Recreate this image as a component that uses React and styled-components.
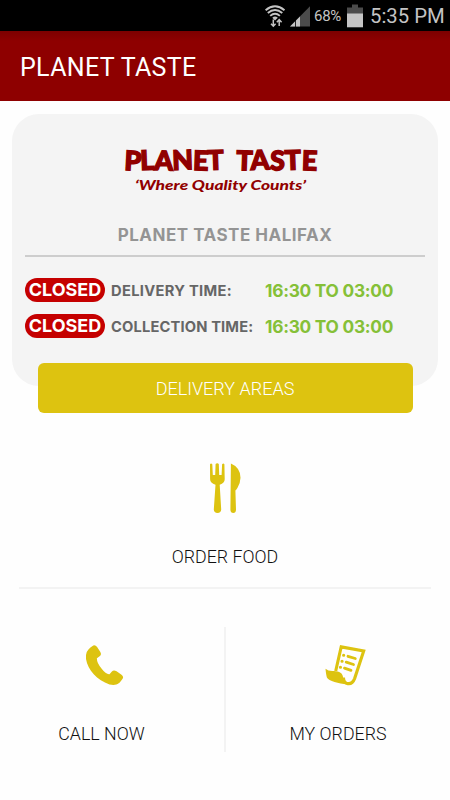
import React from "react";
import styled, { createGlobalStyle } from "styled-components";

export default function App() {
  return (
    <>
      <GlobalStyle />
      <Screen>
        <StatusBar>
          <StatusIcons />
          <Percent>68%</Percent>
          <BatteryIcon />
          <Clock>5:35 PM</Clock>
        </StatusBar>
        <Header>
          <Title>PLANET TASTE</Title>
        </Header>
        <Card>
          <Logo />
          <ShopName>PLANET TASTE HALIFAX</ShopName>
          <Times>
            <TimeRow>
              <Badge>CLOSED</Badge>
              <TimeLabel $spacing={0.3}>DELIVERY TIME:</TimeLabel>
              <Hours>16:30 TO 03:00</Hours>
            </TimeRow>
            <TimeRow>
              <Badge>CLOSED</Badge>
              <TimeLabel $spacing={0.15}>COLLECTION TIME:</TimeLabel>
              <Hours>16:30 TO 03:00</Hours>
            </TimeRow>
          </Times>
        </Card>
        <AreasButton>DELIVERY AREAS</AreasButton>
        <OrderFood>
          <CutleryIcon />
          <ActionLabel $top={33}>ORDER FOOD</ActionLabel>
        </OrderFood>
        <BottomActions>
          <CallNow>
            <PhoneIcon />
            <ActionLabel $top={37}>CALL NOW</ActionLabel>
          </CallNow>
          <Separator />
          <MyOrders>
            <ReceiptIcon />
            <ActionLabel $top={37}>MY ORDERS</ActionLabel>
          </MyOrders>
        </BottomActions>
      </Screen>
    </>
  );
}

function StatusIcons() {
  return (
    <svg width="46" height="30" viewBox="265 0 46 30">
      <g fill="none" stroke="#c4c4c4" strokeWidth="1.9">
        <path d="M265.6 9.2Q275 1.3 284.5 9.2" />
        <path d="M267.8 12.1Q275 6.1 282.3 12.1" />
        <path d="M270.2 14.9Q275 10.6 279.9 14.9" />
      </g>
      <path d="M272.3 16.8Q275 14.2 277.8 16.8L275 19.4Z" fill="#c4c4c4" />
      <path d="M273.3 18.5V25M271 22.8L273.3 25.2L275.6 22.8M279.2 25V18.8M276.8 21.2L279.2 18.7L281.6 21.2" fill="none" stroke="#c4c4c4" strokeWidth="1.5" />
      <path d="M290 25.5L310 5.3V25.5Z" fill="#4b4b4b" />
      <path d="M290 25.5L300 15.4V25.5Z" fill="#c4c4c4" />
      <path d="M295.5 18V26" stroke="#000" strokeWidth="0.8" />
    </svg>
  );
}

function BatteryIcon() {
  return (
    <svg width="16" height="30" viewBox="0 0 16 30">
      <path d="M5 3.5H11V6.5H16V26H0V6.5H5Z" fill="#4b4b4b" />
      <path d="M0 12.5H16V26.3H0Z" fill="#c4c4c4" />
    </svg>
  );
}

function Logo() {
  return (
    <LogoSvg viewBox="120 140 202 60">
      <LogoName x="124" y="170" textLength="100" rotate="3 -2 2 -2 2 -2">
        PLANET
      </LogoName>
      <LogoName x="236" y="170" textLength="81" rotate="2 -2 2 -2 2">
        TASTE
      </LogoName>
      <LogoSlogan x="135" y="190" textLength="171" lengthAdjust="spacingAndGlyphs">
        ‘Where Quality Counts’
      </LogoSlogan>
    </LogoSvg>
  );
}

function CutleryIcon() {
  return (
    <svg width="32" height="50" viewBox="209 463.5 32 50" fill="#ddc310">
      <path d="M210 464.8Q211 463 212.3 464.8L212.8 475.5H215.2L215.6 464.6Q217.3 463 218.8 464.6L219.2 475.5H221.6L222.1 464.8Q223.4 463 224.4 464.8L224.7 479.5Q224.8 483.3 219.7 485.3L221.2 510Q221 513.4 217.5 513.4Q214 513.4 213.8 510L215.5 485.3Q210 483.3 210.1 479.5Z" />
      <path d="M230.9 464Q240.4 468 240.5 478.2Q240.5 483 237.4 488.5Q236 490.5 235.4 491L236 510.2Q235.8 513.4 233.3 513.4Q230.6 513.4 230.4 510.2Z" />
    </svg>
  );
}

function PhoneIcon() {
  return (
    <ShiftedSvg $left={7} width="38" height="41" viewBox="87 644.5 38 41">
      <path d="M87 658.5C86.3 651.5 88.8 648.6 94.3 645Q96.3 644.1 98.1 646.6L101.2 651.2Q103 654 100.6 655.8L97.9 657.8Q97.6 662.5 102.7 668.3Q107.1 674.2 110.5 673.7L112.9 670.9Q114.7 669 117.6 670.8L122.5 674.2Q125 676.3 123.6 678.2C120.5 683 117.6 685.5 110.5 683.9C98.2 679.8 88.7 669.2 87 658.5Z" fill="#ddc310" />
    </ShiftedSvg>
  );
}

function ReceiptIcon() {
  return (
    <ShiftedSvg $left={14} width="41" height="41" viewBox="324.5 644.5 41 41" fill="none" stroke="#ddc310">
      <path d="M335.2 670.5L340.7 646.4L363.2 650.4L354.1 678.1C352.4 682.4 349.7 683.9 346 682.7C343.5 681.8 343 679 343 677" strokeWidth="3.1" />
      <path d="M325 668.3Q328 671 333.4 670.5C339 670.8 342.3 672.5 342.6 677C342.6 680 343.8 682.6 346.5 683.8C338.5 683.3 328 680.5 326.4 677Q325.6 674.5 325 668.3Z" fill="#ddc310" stroke="none" />
      <path d="M347.5 655.8L354.8 658M345.7 661.7L353 664M344 667.6L350.5 669.8" strokeWidth="2.8" strokeLinecap="round" />
      <path d="M343.1 654.7h.1M341.5 660.8h.1M339.9 666.7h.1" strokeWidth="3.1" strokeLinecap="round" />
    </ShiftedSvg>
  );
}

const GlobalStyle = createGlobalStyle`
body {
  margin: 0;
  background: #fefefe;
}
* {
  box-sizing: border-box;
}
svg {
  display: block;
  flex-shrink: 0;
}
`;
const Screen = styled.div`
width: 450px;
height: 800px;
overflow: hidden;
background: #fefefe;
font-family: Roboto, sans-serif;
`;
const ShiftedSvg = styled.svg`
margin-left: ${(props) => props.$left}px;
`;
const StatusBar = styled.div`
display: flex;
align-items: center;
height: 31px;
padding-left: 265px;
background: #000;
color: #c4c4c4;
white-space: nowrap;
`;
const Percent = styled.span`
width: 33px;
margin-left: 3px;
font-size: 15px;
letter-spacing: -0.3px;
line-height: 31px;
padding-top: 2px;
`;
const Clock = styled.span`
margin-left: 7px;
padding-top: 1px;
font-size: 20.3px;
line-height: 31px;
`;
const Header = styled.header`
display: flex;
align-items: center;
height: 70px;
padding: 3px 0 0 20px;
background: linear-gradient(#7c0000, #8e0000 10px);
color: #fff;
`;
const Title = styled.h1`
margin: 0;
font-size: 25px;
font-weight: 400;
letter-spacing: 0.35px;
white-space: nowrap;
`;
const Card = styled.section`
height: 272px;
margin: 13px 12px 0;
padding: 26px 13px 0;
border-radius: 27px;
background: #f4f4f4;
font-family: Inter, sans-serif;
`;
const LogoSvg = styled.svg`
width: 202px;
height: 60px;
margin-left: 95px;
`;
const LogoName = styled.text`
font-family: Lato, sans-serif;
font-size: 27px;
font-weight: 900;
fill: #910000;
stroke: #910000;
stroke-width: 1.4px;
`;
const LogoSlogan = styled.text`
font-family: Lato, sans-serif;
font-size: 13px;
font-style: italic;
font-weight: 900;
fill: #910000;
`;
const ShopName = styled.h2`
height: 57px;
margin: 0;
padding-top: 25px;
border-bottom: 2px solid #cdcdcd;
color: #949494;
font-size: 17px;
font-weight: 700;
letter-spacing: 0.5px;
line-height: 21px;
text-align: center;
white-space: nowrap;
`;
const Times = styled.div`
display: flex;
flex-direction: column;
gap: 12px;
padding-top: 21px;
`;
const TimeRow = styled.div`
display: flex;
align-items: center;
height: 24px;
white-space: nowrap;
`;
const Badge = styled.span`
width: 80px;
height: 24px;
border-radius: 12px;
background: #c50000;
color: #fff;
font-size: 18px;
font-weight: 700;
line-height: 24px;
text-align: center;
`;
const TimeLabel = styled.span`
width: 154px;
margin-left: 6px;
padding-top: 1px;
color: #666;
font-size: 14.7px;
font-weight: 700;
letter-spacing: ${(props) => props.$spacing}px;
`;
const Hours = styled.span`
color: #85c037;
font-size: 17.3px;
font-weight: 700;
letter-spacing: -0.25px;
`;
const AreasButton = styled.button`
position: relative;
display: block;
width: 375px;
height: 50px;
margin: -23px auto 0;
padding: 1px 0 0;
border: 0;
border-radius: 6px;
background: #ddc310;
color: #fff;
font-family: Roboto, sans-serif;
font-size: 18px;
font-weight: 300;
`;
const OrderFood = styled.div`
display: flex;
flex-direction: column;
align-items: center;
height: 176px;
margin: 0 19px;
padding-top: 50px;
border-bottom: 2px solid #f3f3f3;
`;
const ActionLabel = styled.span`
margin-top: ${(props) => props.$top}px;
color: #111;
font-size: 17.8px;
font-weight: 300;
line-height: 22px;
white-space: nowrap;
`;
const BottomActions = styled.div`
display: flex;
padding-top: 38px;
`;
const Action = styled.div`
display: flex;
flex-direction: column;
align-items: center;
width: 224px;
padding-top: 18px;
`;
const CallNow = styled(Action)`
padding-right: 21px;
`;
const MyOrders = styled(Action)`
`;
const Separator = styled.div`
width: 2px;
height: 125px;
background: #f3f3f3;
`;
